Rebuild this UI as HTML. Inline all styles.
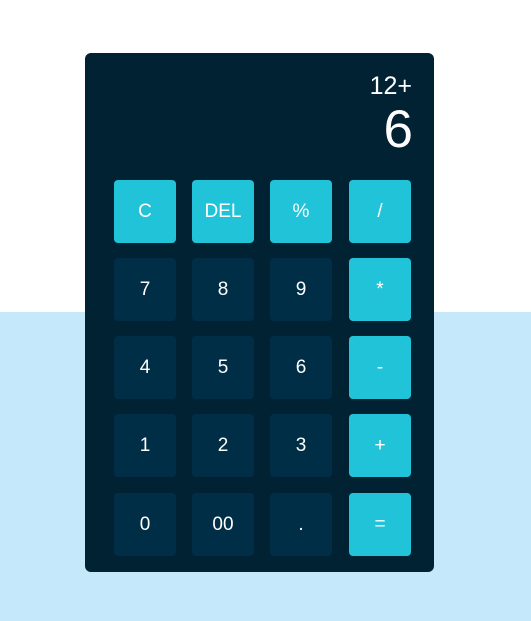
<!DOCTYPE html>
<html><head><style>
body{margin:0;width:531px;height:621px;background:linear-gradient(#fff 0,#fff 312px,#c5e8fb 312px);font-family:"Liberation Sans",sans-serif;position:relative;overflow:hidden}
.calc{position:absolute;left:85px;top:53px;width:349px;height:519px;background:#012233;border-radius:6px}
.prev{position:absolute;right:22px;top:19px;color:#fff;font-size:25px}
.cur{position:absolute;right:21px;top:46px;color:#fff;font-size:53px}
.b{position:absolute;width:62px;height:63px;border-radius:4px;background:#002e46;color:#fff;font-size:19px;display:flex;align-items:center;justify-content:center}
.a{background:#20c3d7}
</style></head><body>
<div class="calc">
<div class="prev">12+</div><div class="cur">6</div>
<div class="b a" style="left:29px;top:127px">C</div>
<div class="b a" style="left:107px;top:127px">DEL</div>
<div class="b a" style="left:185px;top:127px">%</div>
<div class="b a" style="left:264px;top:127px">/</div>
<div class="b" style="left:29px;top:205px">7</div>
<div class="b" style="left:107px;top:205px">8</div>
<div class="b" style="left:185px;top:205px">9</div>
<div class="b a" style="left:264px;top:205px">*</div>
<div class="b" style="left:29px;top:283px">4</div>
<div class="b" style="left:107px;top:283px">5</div>
<div class="b" style="left:185px;top:283px">6</div>
<div class="b a" style="left:264px;top:283px">-</div>
<div class="b" style="left:29px;top:361px">1</div>
<div class="b" style="left:107px;top:361px">2</div>
<div class="b" style="left:185px;top:361px">3</div>
<div class="b a" style="left:264px;top:361px">+</div>
<div class="b" style="left:29px;top:440px">0</div>
<div class="b" style="left:107px;top:440px">00</div>
<div class="b" style="left:185px;top:440px">.</div>
<div class="b a" style="left:264px;top:440px">=</div>
</div>
</body></html>
